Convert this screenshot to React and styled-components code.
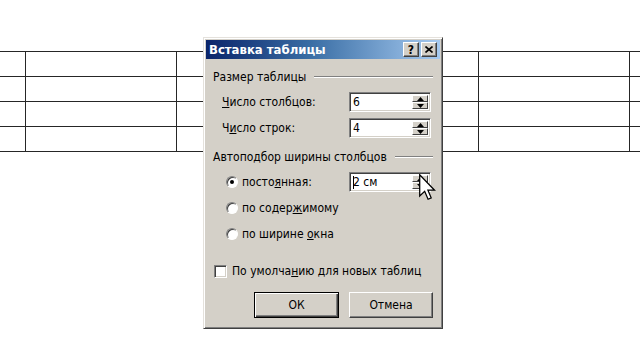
import React from "react";
import styled, { createGlobalStyle } from "styled-components";

const GlobalStyle = createGlobalStyle`
  html, body {
    margin: 0;
    padding: 0;
    background: #fff;
    overflow: hidden;
  }
  body {
    width: 640px;
    height: 360px;
    font-family: "DejaVu Sans Condensed", "DejaVu Sans", "Liberation Sans", sans-serif;
    font-stretch: condensed;
  }
`;

const Page = styled.div`
  position: relative;
  width: 640px;
  height: 360px;
  overflow: hidden;
  background: #fff;
`;

const DocTable = styled.table`
  border-collapse: collapse;
  margin: 51px 0 0 -126px;
  table-layout: fixed;
  width: 906px;
`;

const Cell = styled.td`
  width: 150px;
  height: 24px;
  padding: 0;
  border: 1px solid #262626;
`;

const Dialog = styled.div`
  position: absolute;
  left: 203px;
  top: 37px;
  width: 240px;
  height: 292px;
  box-sizing: border-box;
  background: #d4d0c8;
  border: 1px solid;
  border-color: #e4e1dc #404040 #404040 #e4e1dc;
  box-shadow: inset 1px 1px 0 #fff, inset -1px -1px 0 #808080;
  padding: 2px;
  display: flex;
  flex-direction: column;
  color: #000;
  font-size: 12px;
`;

const TitleBar = styled.div`
  height: 19px;
  display: flex;
  align-items: center;
  padding: 0 3px 0 3px;
  background: linear-gradient(to right, #0a246a 0%, #3a6ea5 45%, #a6caf0 100%);
`;

const Title = styled.div`
  flex: 1;
  color: #fff;
  font-weight: bold;
  font-size: 13px;
`;

const CaptionButton = styled.div`
  width: 16px;
  height: 15px;
  box-sizing: border-box;
  margin-left: ${(p) => (p.$gap ? "2px" : "0")};
  background: #d4d0c8;
  border: 1px solid;
  border-color: #fff #404040 #404040 #fff;
  box-shadow: inset -1px -1px 0 #808080;
  display: flex;
  align-items: center;
  justify-content: center;
  font-weight: bold;
  font-size: 12px;
  line-height: 1;
`;

const Body = styled.div`
  flex: 1;
  display: flex;
  flex-direction: column;
  padding: 11px 7px 0 7px;
`;

const GroupHeader = styled.div`
  display: flex;
  align-items: center;
  height: 14px;
  margin-top: ${(p) => p.$top || 0}px;
  white-space: nowrap;
`;

const GroupLine = styled.div`
  flex: 1;
  margin-left: 8px;
  height: 0;
  border-top: 1px solid #808080;
  border-bottom: 1px solid #fff;
`;

const Row = styled.div`
  display: flex;
  align-items: center;
  height: 20px;
  margin-top: ${(p) => p.$top || 0}px;
  padding-left: ${(p) => p.$indent || 0}px;
`;

const Label = styled.div`
  width: ${(p) => p.$width}px;
  white-space: nowrap;
`;

const Key = styled.span`
  text-decoration: underline;
  text-underline-offset: 1px;
`;

const SpinField = styled.div`
  width: 82px;
  height: 20px;
  box-sizing: border-box;
  display: flex;
  background: #fff;
  border: 1px solid;
  border-color: #808080 #fff #fff #808080;
  box-shadow: inset 1px 1px 0 #404040, inset -1px -1px 0 #d4d0c8;
  padding: 2px;
`;

const SpinValue = styled.div`
  flex: 1;
  display: flex;
  align-items: center;
  padding-left: 1px;
`;

const Caret = styled.span`
  display: inline-block;
  width: 1px;
  height: 13px;
  background: #000;
  margin-right: -1px;
`;

const SpinButtons = styled.div`
  width: 16px;
  display: flex;
  flex-direction: column;
`;

const SpinButton = styled.div`
  flex: 1;
  box-sizing: border-box;
  background: #d4d0c8;
  border: 1px solid;
  border-color: #fff #404040 #404040 #fff;
  display: flex;
  align-items: center;
  justify-content: center;
`;

const Radio = styled.div`
  width: 12px;
  height: 12px;
  box-sizing: border-box;
  border-radius: 50%;
  background: #fff;
  border: 1px solid;
  border-color: #808080 #fff #fff #808080;
  box-shadow: inset 1px 1px 0 #404040;
  margin-right: 4px;
  display: flex;
  align-items: center;
  justify-content: center;
  &::after {
    content: "";
    display: ${(p) => (p.$checked ? "block" : "none")};
    width: 4px;
    height: 4px;
    border-radius: 50%;
    background: #000;
  }
`;

const CheckBox = styled.div`
  width: 13px;
  height: 13px;
  box-sizing: border-box;
  background: #fff;
  border: 1px solid;
  border-color: #808080 #fff #fff #808080;
  box-shadow: inset 1px 1px 0 #404040, inset -1px -1px 0 #d4d0c8;
  margin-right: 5px;
`;

const ButtonBar = styled.div`
  display: flex;
  justify-content: flex-end;
  gap: 10px;
  margin-top: 11px;
`;

const PushButton = styled.div`
  width: ${(p) => p.$width}px;
  height: 26px;
  box-sizing: border-box;
  display: flex;
  align-items: center;
  justify-content: center;
  background: #d4d0c8;
  border: 1px solid;
  border-color: ${(p) =>
    p.$default ? "#000" : "#fff #404040 #404040 #fff"};
  box-shadow: ${(p) =>
    p.$default
      ? "inset 1px 1px 0 #fff, inset -1px -1px 0 #404040, inset -2px -2px 0 #808080"
      : "inset -1px -1px 0 #808080"};
`;

const Pointer = styled.svg`
  position: absolute;
  left: 419px;
  top: 174px;
`;

const Arrow = ({ up }) => (
  <svg width="7" height="4" viewBox="0 0 7 4">
    {up ? (
      <path d="M3.5 0 L7 4 L0 4 Z" fill="#000" />
    ) : (
      <path d="M0 0 L7 0 L3.5 4 Z" fill="#000" />
    )}
  </svg>
);

const Spinner = ({ children }) => (
  <SpinField>
    <SpinValue>{children}</SpinValue>
    <SpinButtons>
      <SpinButton>
        <Arrow up />
      </SpinButton>
      <SpinButton>
        <Arrow />
      </SpinButton>
    </SpinButtons>
  </SpinField>
);

const App = () => {
  const rows = [0, 1, 2, 3];
  const cols = [0, 1, 2, 3, 4, 5];

  return (
    <Page>
      <GlobalStyle />
      <DocTable>
        <tbody>
          {rows.map((r) => (
            <tr key={r}>
              {cols.map((c) => (
                <Cell key={c} />
              ))}
            </tr>
          ))}
        </tbody>
      </DocTable>

      <Dialog>
        <TitleBar>
          <Title>Вставка таблицы</Title>
          <CaptionButton>?</CaptionButton>
          <CaptionButton $gap>
            <svg width="8" height="7" viewBox="0 0 8 7">
              <path d="M0.5 0.5 L7.5 6.5 M7.5 0.5 L0.5 6.5" stroke="#000" strokeWidth="1.6" />
            </svg>
          </CaptionButton>
        </TitleBar>

        <Body>
          <GroupHeader>
            Размер таблицы
            <GroupLine />
          </GroupHeader>
          <Row $top={8} $indent={9}>
            <Label $width={127}>
              <Key>Ч</Key>исло столбцов:
            </Label>
            <Spinner>6</Spinner>
          </Row>
          <Row $top={6} $indent={9}>
            <Label $width={127}>
              Ч<Key>и</Key>сло строк:
            </Label>
            <Spinner>4</Spinner>
          </Row>

          <GroupHeader $top={12}>
            Автоподбор ширины столбцов
            <GroupLine />
          </GroupHeader>
          <Row $top={8} $indent={13}>
            <Radio $checked />
            <Label $width={107}>
              посто<Key>я</Key>нная:
            </Label>
            <Spinner>
              <Caret />2 см
            </Spinner>
          </Row>
          <Row $top={6} $indent={13}>
            <Radio />
            <Label>
              по содер<Key>ж</Key>имому
            </Label>
          </Row>
          <Row $top={6} $indent={13}>
            <Radio />
            <Label>
              по ширине <Key>о</Key>кна
            </Label>
          </Row>

          <Row $top={17} $indent={1}>
            <CheckBox />
            <Label>
              По умолча<Key>н</Key>ию для новых таблиц
            </Label>
          </Row>

          <ButtonBar>
            <PushButton $default $width={85}>
              ОК
            </PushButton>
            <PushButton $width={84}>Отмена</PushButton>
          </ButtonBar>
        </Body>
      </Dialog>

      <Pointer width="17" height="27" viewBox="0 0 12 19">
        <path
          d="M0.5 0.5 L0.5 15.5 L4 12.2 L6.4 17.8 L8.6 16.8 L6.3 11.4 L11 11.4 Z"
          fill="#fff"
          stroke="#000"
          strokeWidth="0.9"
          strokeLinejoin="miter"
        />
      </Pointer>
    </Page>
  );
};

export default App;
